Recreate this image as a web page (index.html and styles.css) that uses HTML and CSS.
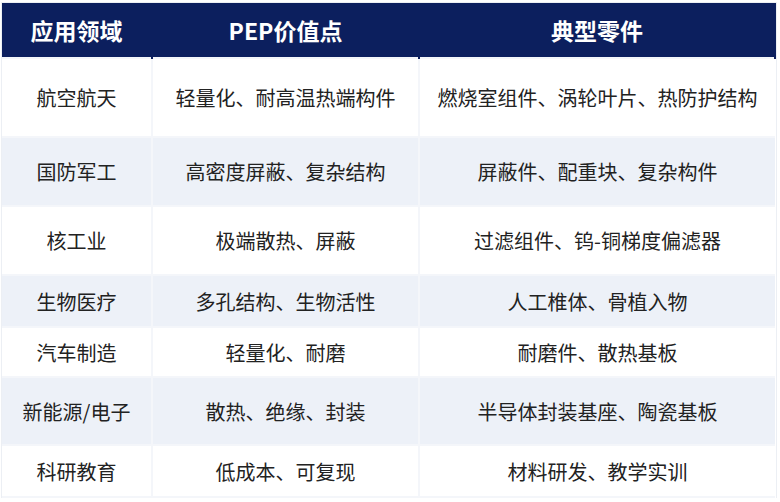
FILE: index.html
```html
<!DOCTYPE html>
<html lang="zh">
<head>
<meta charset="utf-8">
<link rel="stylesheet" href="styles.css">
</head>
<body>
<table class="grid">
  <colgroup>
    <col class="c1"><col class="c2"><col class="c3">
  </colgroup>
  <thead>
    <tr class="head"><th>应用领域</th><th>PEP价值点</th><th>典型零件</th></tr>
  </thead>
  <tbody>
    <tr class="r1"><td>航空航天</td><td>轻量化、耐高温热端构件</td><td>燃烧室组件、涡轮叶片、热防护结构</td></tr>
    <tr class="r2 alt"><td>国防军工</td><td>高密度屏蔽、复杂结构</td><td>屏蔽件、配重块、复杂构件</td></tr>
    <tr class="r3"><td>核工业</td><td>极端散热、屏蔽</td><td>过滤组件、钨-铜梯度偏滤器</td></tr>
    <tr class="r4 alt"><td>生物医疗</td><td>多孔结构、生物活性</td><td>人工椎体、骨植入物</td></tr>
    <tr class="r5"><td>汽车制造</td><td>轻量化、耐磨</td><td>耐磨件、散热基板</td></tr>
    <tr class="r6 alt"><td>新能源/电子</td><td>散热、绝缘、封装</td><td>半导体封装基座、陶瓷基板</td></tr>
    <tr class="r7"><td>科研教育</td><td>低成本、可复现</td><td>材料研发、教学实训</td></tr>
  </tbody>
</table>
</body>
</html>
```

FILE: styles.css
```css
html, body {
  margin: 0;
  padding: 0;
  background: #ffffff;
}
body {
  padding: 3px 0 0 2px;
  font-family: "Noto Sans CJK SC", "Noto Sans", sans-serif;
  color: #222222;
}
.grid {
  border-collapse: collapse;
  width: 773px;
  table-layout: fixed;
  outline: 1px solid #eceff4;
}
.c1 { width: 150px; }
.c2 { width: 267px; }
.c3 { width: 356px; }
.grid th,
.grid td {
  padding: 0;
  text-align: center;
  vertical-align: middle;
  white-space: nowrap;
  border: 2px solid #f4f6fa;
}
.grid th {
  background: #0c1f5e;
  color: #ffffff;
  font-size: 23px;
  font-weight: 700;
  border-top: none;
  border-color: #0c1f5e;
  border-left: 2px solid #e9edf5;
  border-bottom: none;
}
.grid th:first-child { border-left: none; }
.grid td {
  font-size: 20px;
  background: #ffffff;
}
.grid tr.alt td { background: #edf1f8; }
.grid td:first-child { border-left: none; }
.grid td:last-child { border-right: none; }
.head { height: 55px; }
.r1 { height: 79px; }
.r2 { height: 69px; }
.r3 { height: 69px; }
.r4 { height: 52px; }
.r5 { height: 50px; }
.r6 { height: 68px; }
.r7 { height: 52px; }
```
